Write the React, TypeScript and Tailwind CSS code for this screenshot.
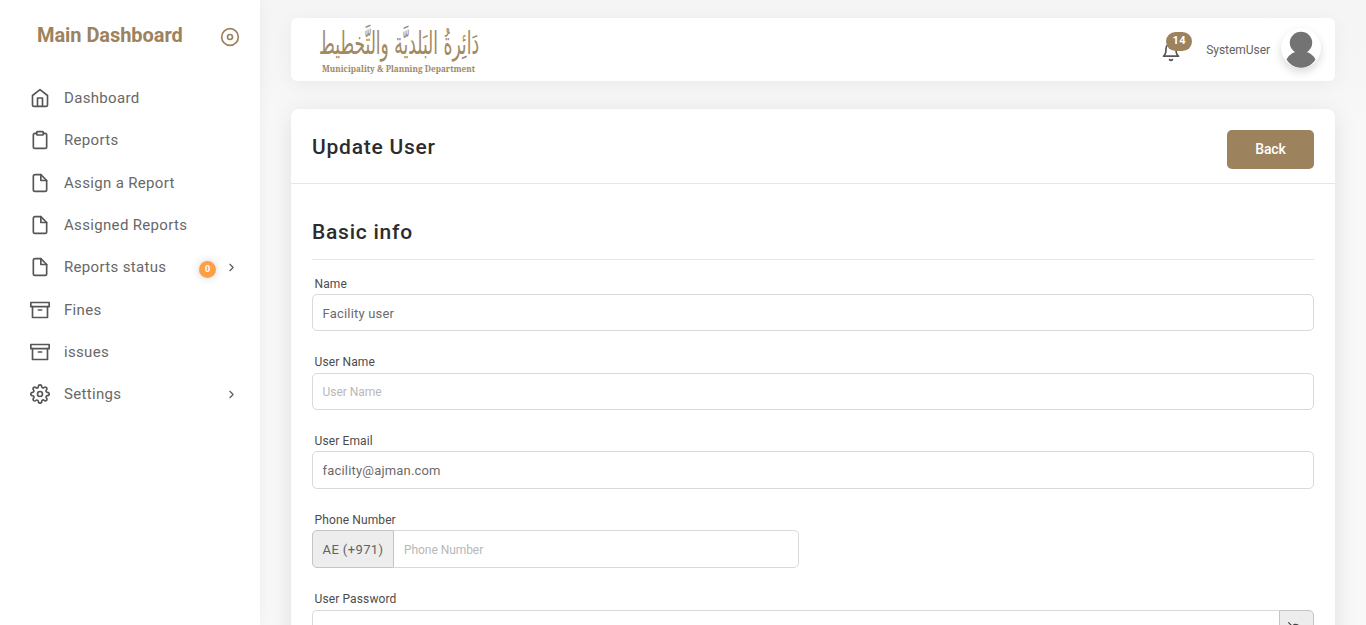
import React from "react";
import { FiHome, FiClipboard, FiFile, FiArchive, FiSettings, FiChevronRight, FiEyeOff, FiBell, FiDisc } from "react-icons/fi";
import type { IconType } from "react-icons";

type Item = { label: string; icon: IconType; badge?: string; arrow?: boolean };

const items: Item[] = [
  { label: "Dashboard", icon: FiHome },
  { label: "Reports", icon: FiClipboard },
  { label: "Assign a Report", icon: FiFile },
  { label: "Assigned Reports", icon: FiFile },
  { label: "Reports status", icon: FiFile, badge: "0", arrow: true },
  { label: "Fines", icon: FiArchive },
  { label: "issues", icon: FiArchive },
  { label: "Settings", icon: FiSettings, arrow: true },
];

function Sidebar() {
  return (
    <aside className="z-10 flex h-[625px] w-[260px] shrink-0 flex-col bg-white shadow-[0_0_15px_0_rgba(34,41,47,0.05)]">
      <div className="flex h-[77px] items-start justify-between pl-[37px] pr-5 pt-[21px]">
        <h2 className="text-[20px] font-bold leading-7 tracking-[-0.06px] text-[#9c825d]">Main Dashboard</h2>
        <FiDisc className="mt-1.5 size-5 text-[#9c825d]" />
      </div>
      <nav className="flex flex-col">
        {items.map(({ label, icon: Icon, badge, arrow }) => (
          <a key={label} className="flex h-[42.3px] items-center pl-[30px] pr-[22px] text-[#565656]">
            <Icon className="size-5 shrink-0" />
            <span className="ml-3.5 flex-1 text-[15px] leading-[22px] tracking-[0.33px] text-[#686868]">{label}</span>
            {badge && (
              <span className="mr-[9px] mt-1 flex size-[17px] items-center justify-center rounded-full bg-[#ff9f43] text-[9px] font-bold text-white shadow-[0_0_8px_rgba(0,0,0,0.18)]">
                {badge}
              </span>
            )}
            {arrow && <FiChevronRight className="size-[13px]" />}
          </a>
        ))}
      </nav>
    </aside>
  );
}

function Logo() {
  return (
    <svg width="174" height="63" viewBox="-4 -6 174 63" fill="#a18962" className="-ml-1 block overflow-visible">
      <g transform="translate(82 29.5) scale(1 1.56)">
        <text x="0" y="0" textAnchor="middle" textLength="160" lengthAdjust="spacingAndGlyphs" direction="rtl" fontSize="20" fontFamily="'DejaVu Sans', sans-serif">
          دَائِرةُ البَلديَّة والتَّخطيط
        </text>
      </g>
      <text x="5" y="47.800" textLength="153" lengthAdjust="spacingAndGlyphs" fontSize="9" fontWeight="700" fontFamily="'Noto Serif', 'DejaVu Serif', serif">
        Municipality &amp; Planning Department
      </text>
    </svg>
  );
}

function Header() {
  return (
    <header className="flex h-[63px] shrink-0 items-center rounded-md bg-white pl-[26px] pr-3.5 shadow-[0_4px_20px_0_rgba(0,0,0,0.05)]">
      <Logo />
      <div className="relative ml-auto mr-[25px] mt-1">
        <FiBell className="size-5 text-[#565656]" />
        <span className="absolute -top-[10px] left-[5px] flex h-[19px] w-[26px] items-center justify-center rounded-full bg-[#9c825d] text-[11px] font-bold tracking-[0.3px] text-white">14</span>
      </div>
      <span className="mr-[11px] text-[12px] tracking-[-0.04px] text-[#626262]">SystemUser</span>
      <svg width="40" height="40" viewBox="0 0 40 40" className="mb-[3px] rounded-full bg-white shadow-[0_4px_8px_0_rgba(0,0,0,0.15)]">
        <path d="M5.500 31.500C7.500 27.500 10.500 25 14.500 24h11c4 1 7 3.500 9 7.500C31 37 26 39.800 20 39.800S9 37 5.500 31.500Z" fill="#737373" />
        <ellipse cx="20" cy="14.700" rx="11.200" ry="11" fill="#737373" />
      </svg>
    </header>
  );
}

function Label({ children, short = false }: { children: React.ReactNode; short?: boolean }) {
  return (
    <label className={`block pl-[2.5px] text-[12px] leading-[21px] tracking-[0.12px] text-[#4c4c4c] ${short ? "h-5" : "h-[21px]"}`}>
      {children}
    </label>
  );
}

const input =
  "w-full rounded-[5px] border border-[#d9d9d9] bg-white px-[9.6px] text-[13px] tracking-[0.18px] text-[#6b6b6b] outline-none placeholder:text-[12px] placeholder:tracking-[-0.04px] placeholder:text-[#b8b8b8]";

export default function App() {
  return (
    <div className="flex h-[625px] w-[1366px] overflow-hidden bg-[#f8f8f8] font-[Roboto,sans-serif]">
      <Sidebar />
      <main className="flex min-w-0 flex-1 flex-col gap-7 bg-[linear-gradient(#f5f5f5,#f6f6f6_80px,#f8f8f8_120px)] pl-[31px] pr-[31px] pt-[18px]">
        <Header />
        <section className="h-[700px] shrink-0 rounded-lg bg-white shadow-[0_4px_25px_0_rgba(0,0,0,0.1)]">
          <div className="flex h-[75px] items-start justify-between border-b border-[#e6e6e6] px-[21px] pt-[21px]">
            <h1 className="text-[21px] font-medium leading-[34px] tracking-[0.75px] text-[#2c2c2c]">Update User</h1>
            <button className="h-[39px] w-[87px] rounded-[5px] bg-[#9c825d] text-[14px] font-medium tracking-[-0.1px] text-white">Back</button>
          </div>
          <div className="px-[21px] pt-[33px]">
            <h2 className="h-[43px] border-b border-[#e6e6e6] text-[21px] font-medium leading-[30px] tracking-[0.75px] text-[#2c2c2c]">Basic info</h2>
            <div className="flex flex-col gap-[21px] pt-3.5">
              <div>
                <Label short>Name</Label>
                <input className={`${input} h-[37px] pt-0.5`} defaultValue="Facility user" />
              </div>
              <div>
                <Label>User Name</Label>
                <input className={`${input} h-[37px]`} placeholder="User Name" />
              </div>
              <div>
                <Label short>User Email</Label>
                <input className={`${input} h-[38px]`} defaultValue="facility@ajman.com" />
              </div>
              <div>
                <Label short>Phone Number</Label>
                <div className="flex h-[38px] w-[487px]">
                  <span className="flex w-[82px] shrink-0 items-center justify-center rounded-l-[5px] border border-[#c4c4c4] bg-[#ededed] pt-0.5 text-[13px] tracking-[0.4px] text-[#626262]">AE (+971)</span>
                  <input className="min-w-0 flex-1 rounded-r-[5px] border border-l-0 border-[#d9d9d9] px-2.5 pt-0.5 text-[12px] outline-none placeholder:tracking-[-0.06px] placeholder:text-[#b8b8b8]" placeholder="Phone Number" />
                </div>
              </div>
              <div>
                <Label>User Password</Label>
                <div className="flex h-[38px]">
                  <input type="password" className="min-w-0 flex-1 rounded-l-[5px] border border-r-0 border-[#d9d9d9] px-2.5 outline-none" />
                  <span className="flex w-[35px] items-start justify-center rounded-r-[5px] border border-[#c4c4c4] bg-[#ededed] pr-1 pt-[11px] text-[#464646]">
                    <FiEyeOff className="size-3.5" />
                  </span>
                </div>
              </div>
            </div>
          </div>
        </section>
      </main>
    </div>
  );
}
